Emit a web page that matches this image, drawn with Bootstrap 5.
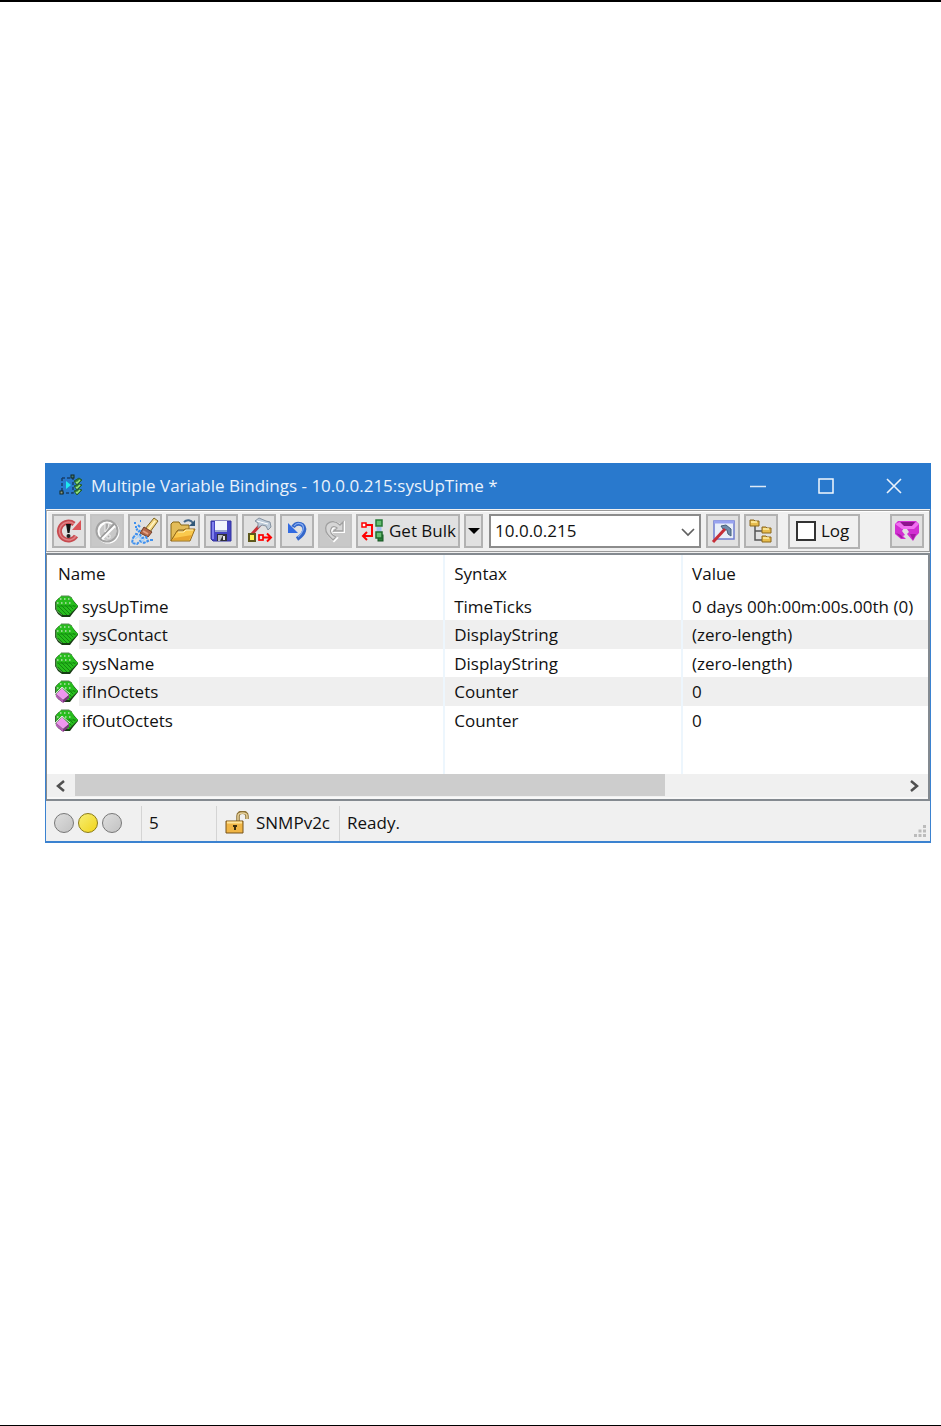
<!DOCTYPE html>
<html lang="en">
<head>
<meta charset="utf-8">
<meta name="viewport" content="width=device-width, initial-scale=1">
<title>Multiple Variable Bindings</title>
<link rel="stylesheet" href="https://cdn.jsdelivr.net/npm/bootstrap@5.3.0/dist/css/bootstrap.min.css">
<style>
  body { font-family: "Open Sans", "Noto Sans", sans-serif; font-size: 17px; line-height: 24px; color: #111; background: #fff; }
  .sheet { border-top: 2px solid #000; border-bottom: 1px solid #000; padding: 461px 10px 0 45px; }
  .app-window { border: 1px solid #3b82d0; border-top: 0; border-bottom-width: 2px; background: #f0f0f0; }
  .title-bar { background: #2979cd; color: #eaf2fb; height: 46px; margin: 0 -1px; padding: 0 3px 0 14px; }
  .title-bar svg { flex: none; }
  .caption-btn { width: 68px; height: 46px; border: 0; padding: 0; background: transparent; color: inherit; display: flex; align-items: center; justify-content: center; }
  .tools { border: 1px solid #9a9a9a; border-left-color: #b4b4b4; height: 42px; margin: 1px 0; padding: 3px 5px; gap: 4px; box-shadow: inset 1px 1px #fff; }
  .tool-btn { width: 34px; height: 34px; flex: none; border: 2px solid #b2b2b2; background: #e1e1e1; padding: 0; display: flex; align-items: center; justify-content: center; color: #111; }
  .tool-btn:disabled { background: #c8c8c8; border-color: #c4c4c4; }
  .tool-btn.bulk { width: 104px; gap: 5px; }
  .tool-btn.drop { width: 19px; }
  .host { width: 212px; height: 34px; border: 2px solid #8c8c8c; background: #fff; margin: 0 1px 0 2px; }
  .host input { border: 0; outline: 0; padding: 0 0 0 4px; min-width: 0; color: #111; background: transparent; }
  .host button { border: 0; background: transparent; padding: 0; width: 26px; }
  .log-box { width: 72px; height: 35px; border: 2px solid #b2b2b2; margin-left: 6px; gap: 5px; padding: 0 0 0 6px; }
  .log-box input { appearance: none; width: 20px; height: 20px; border: 2px solid #333; background: #fff; margin: 0; }
  .list-pane { border: 2px solid #848a90; border-left-width: 1px; background: #fff; }
  .bindings { width: 100%; table-layout: fixed; border-collapse: separate; border-spacing: 0; }
  .bindings th, .bindings td { padding: 0 0 0 9px; height: 28px; white-space: nowrap; font-weight: 400; background-clip: padding-box; border-right: 2px solid #edf6fd; }
  .bindings td { padding-top: 1px; }
  .bindings th { height: 37px; }
  .bindings th:first-child { padding-left: 11px; }
  .bindings th:last-child, .bindings td:last-child { border-right: 0; }
  .bindings .even td { height: 29px; background-color: #efefef; }
  .bindings .oid { padding-left: 8px; }
  .bindings .even td.oid { background: linear-gradient(90deg, #fff 32px, #efefef 32px); }
  .bindings .oid svg { display: block; flex: none; }
  .bindings .oid div { gap: 3px; }
  .bindings .rest td { height: 40px; }
  .c-name { width: 45.2%; } .c-syntax { width: 27%; }
  .scroller { height: 25px; background: #f0f0f0; border-bottom: 2px solid #f8f8f8; }
  .scroller button { width: 28px; height: 23px; border: 0; padding: 0; background: transparent; display: flex; align-items: center; justify-content: center; }
  .track { height: 23px; }
  .thumb { width: 71.5%; height: 22px; background: #cdcdcd; }
  .status { height: 40px; padding: 4px 0 0 8px; }
  .pane { height: 35px; border-right: 1px solid #d4d4d4; }
  .lamps { width: 88px; gap: 4px; }
  .lamp { width: 20px; height: 20px; border-radius: 50%; border: 1px solid #777; background: linear-gradient(135deg, #dedede, #c2c2c2); }
  .lamp.on { border-color: #8b7b17; background: linear-gradient(135deg, #f6ee74, #f1d41c); }
  .count { width: 75px; padding-left: 7px; }
  .version { width: 123px; padding-left: 7px; gap: 6px; }
  .ready { padding-left: 7px; }
  .after { height: 582px; }
</style>
</head>
<body>
<svg width="0" height="0" class="position-absolute" aria-hidden="true">
  <defs>
    <pattern id="weave" width="4" height="4" patternUnits="userSpaceOnUse"><path d="M0 0l4 4" stroke="#13850f" stroke-width="1"/></pattern>
    <g id="leaf">
      <path d="M6 2h9l3 3 5 6v1l-5 6-3 4H7l-4-3-3-5V7l3-3z" fill="#173d14"/>
      <path d="M6 1h8l3 2 2 4 4 4-5 5-4 4H7l-4-3-2-4V6l3-3z" fill="#27bd1d"/>
      <path d="M3 10h19l-5 6-3 4H7l-4-3z" fill="url(#weave)"/>
      <path d="M5 4h11M2 8h16" stroke="#b9dfb2" stroke-width="1.3" stroke-dasharray="1.5 2.5"/>
      <path d="M2 11h19" stroke="#159111" stroke-width="1"/>
      <path d="M6 1h8l3 2M1 6l3-3M1 7v7l2 3 4 3" fill="none" stroke="#5a8a55"/>
    </g>
    <g id="leafcube">
      <use href="#leaf"/>
      <path d="M1 14l6-6 7 7-6 5z" fill="#ee96ee"/>
      <path d="M1 14v3l7 6v-3z" fill="#b35bb5"/>
      <path d="M8 20l6-5v3l-6 5z" fill="#7c367e"/>
      <path d="M0 17v-3l7-7 8 7" fill="none" stroke="#d9ead6"/>
    </g>
  </defs>
</svg>
<div class="sheet">
  <main class="app-window">
    <header class="title-bar d-flex align-items-center">
      <svg width="24" height="24" viewBox="0 0 24 24" fill="none"><path d="M3 4v14M3 4h11v15H3" stroke="#173f6c" stroke-width="1.500" stroke-dasharray="3 2"/><rect x="12" y="1" width="3" height="3" fill="#3f7d78" stroke="#152820"/><rect x="1" y="17" width="3" height="3" fill="#8a9c8d" stroke="#152820"/><path d="M7 7l5 4-5 4z" fill="#1de9ef"/><path d="M15 17l3 4 5-5-3-1zM15 12l3 4 5-5-3-1zM15 7l3 4 5-5-3-2z" fill="#2d7d36" stroke="#245a35"/><path d="M17 8l1 1 3-3M17 13l1 1 3-3M17 18l1 1 3-3" stroke="#9ce47c" stroke-width="1.500"/></svg>
      <span class="ms-2 me-auto text-nowrap">Multiple Variable Bindings - 10.0.0.215:sysUpTime *</span>
      <button class="caption-btn" aria-label="Minimize"><svg width="16" height="16"><path d="M0 8.5h16" stroke="#dce9f7" stroke-width="1.5"/></svg></button>
      <button class="caption-btn" aria-label="Maximize"><svg width="16" height="16"><rect x="1" y="1" width="14" height="14" fill="none" stroke="#f2f7fd" stroke-width="1.5"/></svg></button>
      <button class="caption-btn" aria-label="Close"><svg width="16" height="16"><path d="M1 1l14 14M15 1L1 15" stroke="#eaf2fb" stroke-width="1.6"/></svg></button>
    </header>
    <div class="tools d-flex align-items-center" role="toolbar">
      <button class="tool-btn" aria-label="Retry"><svg width="26" height="26" viewBox="0 0 26 26" fill="none"><path d="M18 6A9 9 0 1 0 20 18" stroke="#c74b50" stroke-width="5"/><path d="M18 6A9 9 0 1 0 20 18" stroke="#e08386" stroke-width="1.500"/><path d="M25 2v10h-9z" fill="#d95357"/><path d="M10 6h5l-1.500 9h-2z" fill="#111"/><circle cx="12.500" cy="18" r="2" fill="#222"/></svg></button>
      <button class="tool-btn" disabled aria-label="Stop"><svg width="26" height="26" viewBox="0 0 26 26" fill="none"><circle cx="14" cy="14" r="10" stroke="#fff" stroke-width="3"/><circle cx="13" cy="13" r="10.500" stroke="#a2a2a2" stroke-width="2"/><path d="M6 21L20 6" stroke="#9a9a9a" stroke-width="2"/><path d="M8 21L21 8" stroke="#fff" stroke-width="2"/><path d="M11 5l4 0-1 5-3 4zM13 17h3v3h-3z" fill="#aaa" stroke="#eee"/></svg></button>
      <button class="tool-btn" aria-label="Clear"><svg width="28" height="28" viewBox="0 0 28 28" fill="none"><path d="M23 1l4 3-8 11-5-3z" fill="#f2d581" stroke="#7c6421"/><path d="M24 4l-7 9" stroke="#fff5c4" stroke-width="1.500"/><path d="M13 10l8 5-4 5-8-4z" fill="#b56849" stroke="#71402b"/><path d="M12 14l5 3" stroke="#e5a184" stroke-width="2"/><path d="M2 21l3-4 4 1 2 3 4-1 2 4-4 2-4-2-3 3-5-1zM5 13l2-1M9 10l-2-2M3 6h2M9 4h1M4 10h2M7 15l3-2M19 23h3" stroke="#3f91ef" stroke-width="2" stroke-dasharray="3 1"/><path d="M4 22l4-3 3 5 3-2" stroke="#a6d1fa" stroke-width="1.500"/></svg></button>
      <button class="tool-btn" aria-label="Open"><svg width="28" height="26" viewBox="0 0 28 26" fill="none"><path d="M2 23V6l2-2h6l2 3h8v5H9z" fill="#e3bc58" stroke="#876615"/><path d="M2 23l6-10h6l2-2h10l-5 12z" fill="#fac94d" stroke="#94691b"/><path d="M3 22l17 0 3-5-18 3z" fill="#e9a52e"/><path d="M9 14h6l2-2h7" stroke="#fff1b0"/><path d="M15 4c3-3 7-2 9 1" stroke="#456787" stroke-width="2"/><path d="M26 2v6h-6z" fill="#315878"/></svg></button>
      <button class="tool-btn" aria-label="Save"><svg width="24" height="24" viewBox="0 0 24 24"><path d="M2 2h20v20H4l-2-2z" fill="#4545c2" stroke="#3434a0"/><path d="M3 3h2v17H3z" fill="#8080ee"/><path d="M6 2h12v10H6z" fill="#f1f4fc"/><path d="M6 11h12v2H6z" fill="#9ba6ce"/><path d="M8 15h10v7H8z" fill="#303039"/><path d="M9 16h5l-3 6H9z" fill="#b9bac0"/><path d="M14 17h2v4h-2z" fill="#e6e6e6"/></svg></button>
      <button class="tool-btn" aria-label="Build"><svg width="28" height="28" viewBox="0 0 28 28" fill="none"><path d="M7 17l9-10" stroke="#c93034" stroke-width="3"/><path d="M10 4l4-3 7 3 4 1 1 5-3 3-2-4-4-1-4 3 0-5z" fill="#bdcbd9" stroke="#8592a0"/><path d="M12 4l7 2 4 1" stroke="#fff"/><rect x="4" y="17" width="6" height="7" fill="#fff450" stroke="#5e581c" stroke-width="2"/><rect x="14" y="18" width="4" height="5" stroke="red" stroke-width="1.700"/><path d="M18 20.500h8M22 16.500l4 4-4 4" stroke="red" stroke-width="2"/></svg></button>
      <button class="tool-btn" aria-label="Undo"><svg width="24" height="24" viewBox="0 0 24 24" fill="none"><path d="M8 8c4-6 13-3 11 4-1 4-4 6-7 8" stroke="#3467ca" stroke-width="4"/><path d="M9 7c4-5 11-2 9 4-1 3-3 5-5 7" stroke="#87adf2" stroke-width="1.200"/><path d="M3 4v10h10z" fill="#326be1"/></svg></button>
      <button class="tool-btn" disabled aria-label="Redo"><svg width="24" height="24" viewBox="0 0 24 24" fill="none"><path d="M17 6C10-1 1 4 3 12c1 4 4 6 7 9l3-3c-4-2-7-5-5-8 1-3 4-3 6-1l-3 3h9V3z" fill="#fff" stroke="#fff" stroke-width="2" transform="translate(1 1)"/><path d="M17 6C10-1 1 4 3 12c1 4 4 6 7 9l3-3c-4-2-7-5-5-8 1-3 4-3 6-1l-3 3h9V3z" fill="#d6d6d6" stroke="#a0a0a0" stroke-width="1.300"/></svg></button>
      <button class="tool-btn bulk text-nowrap"><svg width="24" height="24" viewBox="0 0 24 24" fill="none"><path d="M4 6h8v11H3M7 13l-4 4 4 4" stroke="red" stroke-width="2"/><rect x="2" y="4" width="4" height="4" fill="#fff" stroke="red" stroke-width="1.500"/><path d="M19 8v6" stroke="#a6c2ee" stroke-width="5"/><rect x="16" y="1" width="6" height="6" fill="#68bd72" stroke="#257a34" stroke-width="1.500"/><rect x="18" y="16" width="5" height="6" fill="#2d7f3a" stroke="#145522"/><rect x="16" y="13" width="6" height="6" fill="#68bd72" stroke="#1f6b2d" stroke-width="1.500"/></svg>Get Bulk</button>
      <button class="tool-btn drop" aria-label="Request types"><svg width="12" height="7"><path d="M0 0h12L6 6z" fill="#000"/></svg></button>
      <div class="host d-flex">
        <input class="flex-grow-1" type="text" value="10.0.0.215" aria-label="Agent address">
        <button aria-label="Choose agent"><svg width="14" height="10" fill="none"><path d="M1 2l6 6 6-6" stroke="#606060" stroke-width="1.700"/></svg></button>
      </div>
      <button class="tool-btn" aria-label="Agent settings"><svg width="26" height="26" viewBox="0 0 26 26" fill="none"><rect x="4" y="3" width="20" height="18" fill="#e8eef9" stroke="#6f7cce" stroke-width="1.500"/><path d="M4 4h20" stroke="#98a3f0" stroke-width="3"/><path d="M11 8l5-1 5 4v7l-3-2-1-4-4-1z" fill="#6e8bac" stroke="#466078"/><path d="M15 11L3 24" stroke="#c62e38" stroke-width="3"/></svg></button>
      <button class="tool-btn" aria-label="Tree"><svg width="26" height="26" viewBox="0 0 26 26" fill="none"><path d="M7 8v14h7M7 13h7" stroke="#555" stroke-width="1.500"/><g fill="#e8bd4d" stroke="#8a671c"><path id="fold" d="M2 2h4l1 1h4v5H2z"/><use href="#fold" x="12" y="7"/><use href="#fold" x="12" y="16"/></g><path d="M3 4h6M15 11h6M15 20h6" stroke="#fff0a8" stroke-width="1.500"/></svg></button>
      <label class="log-box d-flex align-items-center"><input type="checkbox">Log</label>
      <button class="tool-btn ms-auto" aria-label="Send"><svg width="26" height="24" viewBox="0 0 26 24"><path d="M4 2h18l3 3v9l-3 3-3 5-6-7 2-2-2-3 2-1h-5l-2 3 3 4-2 1 3 3H7l-6-5V5z" fill="#d22fd2"/><path d="M5 3h16l-3 4H9z" fill="#8d128d"/><path d="M1 5l5-2 4 4h8l4-4 3 2-5 5H8z" fill="#f070f0"/><path d="M2 14l5 2 2 3H7zM16 15l6 0-3 6z" fill="#a31aa3"/></svg></button>
    </div>
    <section class="list-pane">
      <table class="bindings">
        <colgroup><col class="c-name"><col class="c-syntax"><col></colgroup>
        <thead><tr><th>Name</th><th>Syntax</th><th>Value</th></tr></thead>
        <tbody>
          <tr><td class="oid"><div class="d-flex align-items-center"><svg width="24" height="24"><use href="#leaf"/></svg>sysUpTime</div></td><td>TimeTicks</td><td>0 days 00h:00m:00s.00th (0)</td></tr>
          <tr class="even"><td class="oid"><div class="d-flex align-items-center"><svg width="24" height="24"><use href="#leaf"/></svg>sysContact</div></td><td>DisplayString</td><td>(zero-length)</td></tr>
          <tr><td class="oid"><div class="d-flex align-items-center"><svg width="24" height="24"><use href="#leaf"/></svg>sysName</div></td><td>DisplayString</td><td>(zero-length)</td></tr>
          <tr class="even"><td class="oid"><div class="d-flex align-items-center"><svg width="24" height="24"><use href="#leafcube"/></svg>ifInOctets</div></td><td>Counter</td><td>0</td></tr>
          <tr><td class="oid"><div class="d-flex align-items-center"><svg width="24" height="24"><use href="#leafcube"/></svg>ifOutOctets</div></td><td>Counter</td><td>0</td></tr>
          <tr class="rest"><td></td><td></td><td></td></tr>
        </tbody>
      </table>
      <div class="scroller d-flex">
        <button aria-label="Scroll left"><svg width="12" height="12" fill="none"><path d="M9 1L3 6l6 5" stroke="#505050" stroke-width="2.500"/></svg></button>
        <div class="track flex-grow-1"><div class="thumb"></div></div>
        <button aria-label="Scroll right"><svg width="12" height="12" fill="none"><path d="M3 1l6 5-6 5" stroke="#505050" stroke-width="2.500"/></svg></button>
      </div>
    </section>
    <footer class="status d-flex align-items-center">
      <div class="pane lamps d-flex align-items-center"><span class="lamp"></span><span class="lamp on"></span><span class="lamp"></span></div>
      <div class="pane count d-flex align-items-center">5</div>
      <div class="pane version d-flex align-items-center"><svg width="26" height="24" viewBox="0 0 26 24" fill="none"><path d="M14 10V5c0-5 9-5 9 0v3" stroke="#8d7135" stroke-width="3.500"/><path d="M14 10V5c0-4 9-4 9 0v3" stroke="#e7d29c" stroke-width="1.500"/><path d="M2 10h17v12H2z" fill="#f0b545" stroke="#76531a"/><path d="M3 11.500h15" stroke="#ffe49a" stroke-width="2"/><path d="M9 14h4v2h-1v3H10v-3H9z" fill="#3e300f"/></svg>SNMPv2c</div>
      <div class="ready">Ready.</div>
      <svg class="ms-auto align-self-end mb-1 me-1" width="12" height="12" fill="#bcbcbc"><path d="M9 0h3v3H9zM9 4.500h3v3H9zM4.500 4.500h3v3h-3zM0 9h3v3H0zM4.500 9h3v3h-3zM9 9h3v3H9z"/></svg>
    </footer>
  </main>
  <div class="after"></div>
</div>
<script src="https://cdn.jsdelivr.net/npm/bootstrap@5.3.0/dist/js/bootstrap.bundle.min.js"></script>
</body>
</html>
